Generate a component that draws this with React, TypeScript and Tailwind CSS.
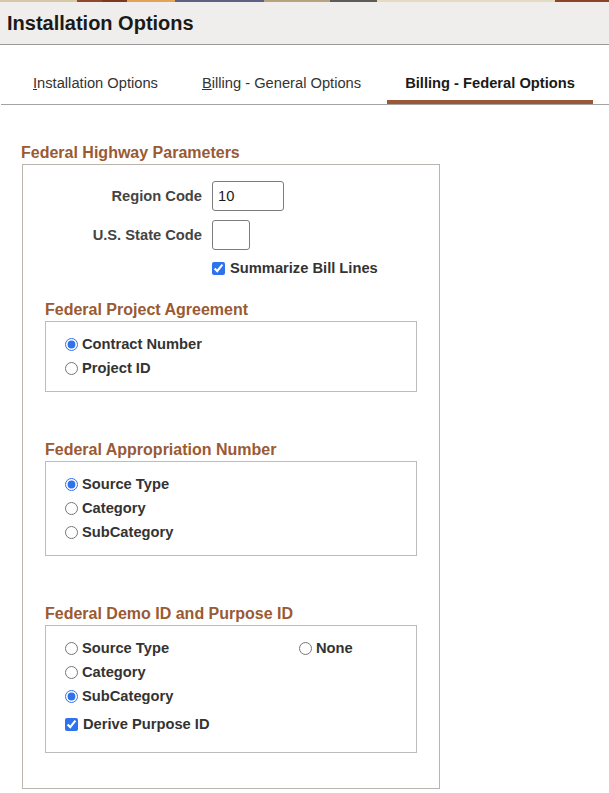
import React from "react";

const strip = [
  { w: 77, c: "bg-[#d8c8a6]" },
  { w: 25, c: "bg-[#8c4a2a]" },
  { w: 25, c: "bg-[#7a3a20]" },
  { w: 48, c: "bg-[#e2a556]" },
  { w: 89, c: "bg-[#5c6082]" },
  { w: 66, c: "bg-[#b7a47e]" },
  { w: 47, c: "bg-[#5e5a55]" },
  { w: 178, c: "bg-[#e6dbbf]" },
  { w: 54, c: "bg-[#8a4528]" },
];

function Radio({ label, checked, name }: { label: string; checked?: boolean; name: string }) {
  return (
    <label className="flex h-[24px] items-center gap-[4px] text-[14.7px] font-bold text-[#333333]">
      <input
        type="radio"
        name={name}
        defaultChecked={checked}
        className="m-0 h-[13px] w-[13px] accent-[#2f72ee]"
      />
      <span>{label}</span>
    </label>
  );
}

function Check({ label }: { label: string }) {
  return (
    <label className="flex h-[24px] items-center gap-[5px] text-[14.7px] font-bold text-[#333333]">
      <input type="checkbox" defaultChecked className="m-0 h-[13px] w-[13px] accent-[#2f72ee]" />
      <span>{label}</span>
    </label>
  );
}

function Heading({ children, className = "" }: { children: React.ReactNode; className?: string }) {
  return (
    <div className={"h-[18px] text-[16px] leading-[18px] font-bold text-[#9a5a33] " + className}>
      {children}
    </div>
  );
}

export default function App() {
  return (
    <div
      className="h-[793px] w-[609px] overflow-hidden bg-white"
      style={{ fontFamily: '"Liberation Sans", Arial, sans-serif' }}
    >
      <div className="flex h-[2px]">
        {strip.map((s, i) => (
          <div key={i} className={s.c} style={{ width: s.w }} />
        ))}
      </div>
      <div className="flex h-[43px] items-center border-b border-[#9a9a9a] bg-[#efeeec] pl-[7px]">
        <h1 className="text-[20px] font-bold text-[#1a1a1a]">Installation Options</h1>
      </div>
      <div className="ml-[1px] flex h-[60px] items-end gap-[8px] border-b border-[#a3a3a3] pl-[14px]">
        <div className="flex h-[40px] items-center border-b-4 border-transparent px-[18px] pt-[2px] text-[14.7px] text-[#333333]">
          <span>
            <u>I</u>nstallation Options
          </span>
        </div>
        <div className="flex h-[40px] items-center border-b-4 border-transparent px-[18px] pt-[2px] text-[14.7px] text-[#333333]">
          <span>
            <u>B</u>illing - General Options
          </span>
        </div>
        <div className="flex h-[40px] items-center border-b-4 border-[#9a5836] px-[18px] pt-[2px] text-[14.7px] font-bold text-[#1a1a1a]">
          Billing - Federal Options
        </div>
      </div>

      <div className="pl-[21px] pt-[39px]">
        <Heading>Federal Highway Parameters</Heading>
        <div className="ml-[1px] mt-[2px] w-[418px] border border-[#bab4ae] pb-[35px] pt-[16px]">
          <div className="flex items-center">
            <div className="w-[179px] text-right text-[14.7px] font-bold text-[#444444]">Region Code</div>
            <input
              defaultValue="10"
              className="ml-[10px] h-[30px] w-[72px] rounded-[3px] border border-[#7d7d7d] px-[5px] text-[14.7px] text-[#1a1a1a] outline-none"
            />
          </div>
          <div className="mt-[9px] flex items-center">
            <div className="w-[179px] text-right text-[14.7px] font-bold text-[#444444]">U.S. State Code</div>
            <input className="ml-[10px] h-[30px] w-[38px] rounded-[3px] border border-[#7d7d7d] px-[5px] text-[14.7px] outline-none" />
          </div>
          <div className="ml-[189px] mt-[6px]">
            <Check label="Summarize Bill Lines" />
          </div>

          <div className="ml-[22px] mt-[21px] w-[372px]">
            <Heading>Federal Project Agreement</Heading>
            <div className="mt-[2px] border border-[#bcbcbc] pb-[11px] pl-[19px] pt-[10px]">
              <Radio name="fpa" label="Contract Number" checked />
              <Radio name="fpa" label="Project ID" />
            </div>
          </div>

          <div className="ml-[22px] mt-[49px] w-[372px]">
            <Heading>Federal Appropriation Number</Heading>
            <div className="mt-[2px] border border-[#bcbcbc] pb-[11px] pl-[19px] pt-[10px]">
              <Radio name="fan" label="Source Type" checked />
              <Radio name="fan" label="Category" />
              <Radio name="fan" label="SubCategory" />
            </div>
          </div>

          <div className="ml-[22px] mt-[49px] w-[372px]">
            <Heading>Federal Demo ID and Purpose ID</Heading>
            <div className="mt-[2px] border border-[#bcbcbc] pb-[16px] pl-[19px] pt-[10px]">
              <div className="grid grid-cols-[234px_auto]">
                <div>
                  <Radio name="fdi" label="Source Type" />
                  <Radio name="fdi" label="Category" />
                  <Radio name="fdi" label="SubCategory" checked />
                </div>
                <div>
                  <Radio name="fdi" label="None" />
                </div>
              </div>
              <div className="mt-[4px]">
                <Check label="Derive Purpose ID" />
              </div>
            </div>
          </div>
        </div>
      </div>
    </div>
  );
}
